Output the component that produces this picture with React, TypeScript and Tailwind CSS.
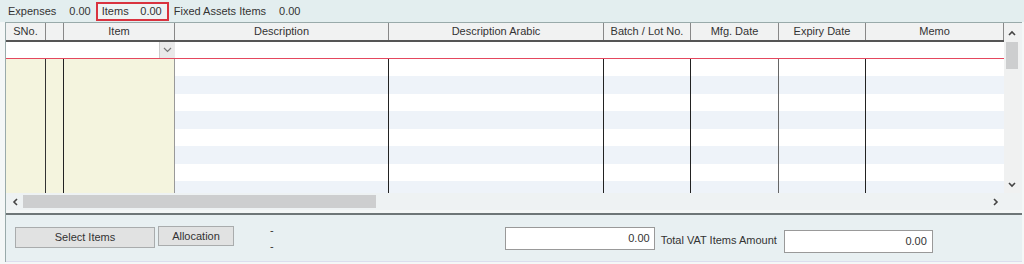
import React from 'react';

const cols = [
  { name: 'SNo.', w: 'w-[40px]', line: 'border-[#333]', cream: true },
  { name: '', w: 'w-[18px]', line: 'border-[#222]', cream: true },
  { name: 'Item', w: 'w-[111px]', line: 'border-[#999]', cream: true },
  { name: 'Description', w: 'w-[214px]', line: 'border-[#222]', cream: false },
  { name: 'Description Arabic', w: 'w-[215px]', line: 'border-[#222]', cream: false },
  { name: 'Batch / Lot No.', w: 'w-[87px]', line: 'border-[#222]', cream: false },
  { name: 'Mfg. Date', w: 'w-[88px]', line: 'border-[#666]', cream: false },
  { name: 'Expiry Date', w: 'w-[87px]', line: 'border-[#222]', cream: false },
  { name: 'Memo', w: 'w-[138px]', line: 'border-transparent', cream: false },
];

const rowHeights = ['h-[17px]', 'h-[18px]', 'h-[17px]', 'h-[18px]', 'h-[17px]', 'h-[18px]', 'h-[17px]', 'h-[12px]'];

export default function App() {
  return (
    <div className="w-[1024px] h-[264px] bg-[#f4f7f7] overflow-hidden text-[11px] text-[#333]" style={{ fontFamily: '"Liberation Sans", Arial, sans-serif' }}>
      {/* Top totals strip */}
      <div className="h-[22px] bg-[#e3eeef] flex items-center pl-[8px]">
        <span>Expenses</span>
        <span className="ml-[13px]">0.00</span>
        <div className="ml-[5px] h-[19px] w-[73px] border-2 border-[#d9333f] flex items-center justify-between pl-[4px] pr-[5px] bg-[#eef4f4]">
          <span>Items</span>
          <span>0.00</span>
        </div>
        <span className="ml-[5px]">Fixed Assets Items</span>
        <span className="ml-[13px]">0.00</span>
      </div>

      {/* Grid */}
      <div className="ml-[5px] w-[1017px] border-l border-t border-[#9aa] flex">
        <div className="w-[998px] flex flex-col">
          {/* Header */}
          <div className="flex h-[19px] bg-[#f1f2f2] border-b-2 border-[#555]">
            {cols.map((c, i) => (
              <div key={i} className={`${c.w} shrink-0 border-r border-[#888] flex items-center justify-center`}>
                {c.name}
              </div>
            ))}
          </div>
          {/* New row */}
          <div className="flex h-[17px] bg-white border-b border-[#e5475e]">
            {cols.map((c, i) => (
              <div key={i} className={`${c.w} shrink-0 relative`}>
                {c.name === 'Item' && (
                  <div className="absolute right-0 top-0 h-[16px] w-[16px] bg-[#e9e9e9] border-l border-[#ccc] flex items-center justify-center">
                    <svg width="9" height="6" viewBox="0 0 9 6"><path d="M1 1 L4.5 4.5 L8 1" stroke="#777" strokeWidth="1.2" fill="none" /></svg>
                  </div>
                )}
              </div>
            ))}
          </div>
          {/* Body rows */}
          {rowHeights.map((h, r) => (
            <div key={r} className={`flex ${h}`}>
              {cols.map((c, i) => (
                <div
                  key={i}
                  className={`${c.w} shrink-0 border-r ${c.line} ${c.cream ? 'bg-[#f4f4de]' : r % 2 === 0 ? 'bg-white' : 'bg-[#eef3f9]'}`}
                />
              ))}
            </div>
          ))}
          {/* Horizontal scrollbar */}
          <div className="h-[17px] bg-[#eef2f3] flex items-center">
            <div className="w-[17px] flex items-center justify-center">
              <svg width="6" height="8" viewBox="0 0 6 8"><path d="M5 1 L2 4 L5 7" stroke="#444" strokeWidth="1.6" fill="none" /></svg>
            </div>
            <div className="w-[353px] h-[13px] bg-[#cdcecf]" />
            <div className="flex-1" />
            <div className="w-[17px] flex items-center justify-center">
              <svg width="6" height="8" viewBox="0 0 6 8"><path d="M1 1 L4 4 L1 7" stroke="#444" strokeWidth="1.6" fill="none" /></svg>
            </div>
          </div>
        </div>
        {/* Vertical scrollbar */}
        <div className="w-[17px] flex flex-col bg-[#f0f1f1]">
          <div className="h-[19px] flex items-center justify-center">
            <svg width="8" height="6" viewBox="0 0 8 6"><path d="M1 5 L4 2 L7 5" stroke="#444" strokeWidth="1.6" fill="none" /></svg>
          </div>
          <div className="mx-[2px] h-[27px] bg-[#cdcecf]" />
          <div className="flex-1" />
          <div className="h-[17px] flex items-center justify-center">
            <svg width="8" height="6" viewBox="0 0 8 6"><path d="M1 1 L4 4 L7 1" stroke="#444" strokeWidth="1.6" fill="none" /></svg>
          </div>
          <div className="h-[17px] bg-[#eef2f3]" />
        </div>
        <div className="w-[2px] bg-[#eef2f3]" />
      </div>

      {/* Bottom panel */}
      <div className="ml-[5px] w-[1017px] border-l border-[#9aa] pt-[3px]">
        <div className="h-[49px] border-t-2 border-[#6f7778] border-b border-b-[#dde] bg-[#e8f0f2] flex items-start">
          <div className="mt-[12px] ml-[9px] w-[140px] h-[21px] bg-[#e1e2e2] border border-[#a9acad] flex items-center justify-center">Select Items</div>
          <div className="mt-[11px] ml-[3px] w-[76px] h-[20px] bg-[#e1e2e2] border border-[#a9acad] flex items-center justify-center">Allocation</div>
          <div className="ml-[36px] mt-[10px] flex flex-col leading-none">
            <span>-</span>
            <span className="mt-[5px]">-</span>
          </div>
          <div className="ml-[231px] mt-[12px] w-[150px] h-[23px] bg-white border border-[#999] flex items-center justify-end pr-[4px]">0.00</div>
          <span className="ml-[6px] mt-[17px]">Total VAT Items Amount</span>
          <div className="ml-[7px] mt-[15px] w-[149px] h-[23px] bg-white border border-[#999] flex items-center justify-end pr-[5px]">0.00</div>
        </div>
      </div>
    </div>
  );
}
